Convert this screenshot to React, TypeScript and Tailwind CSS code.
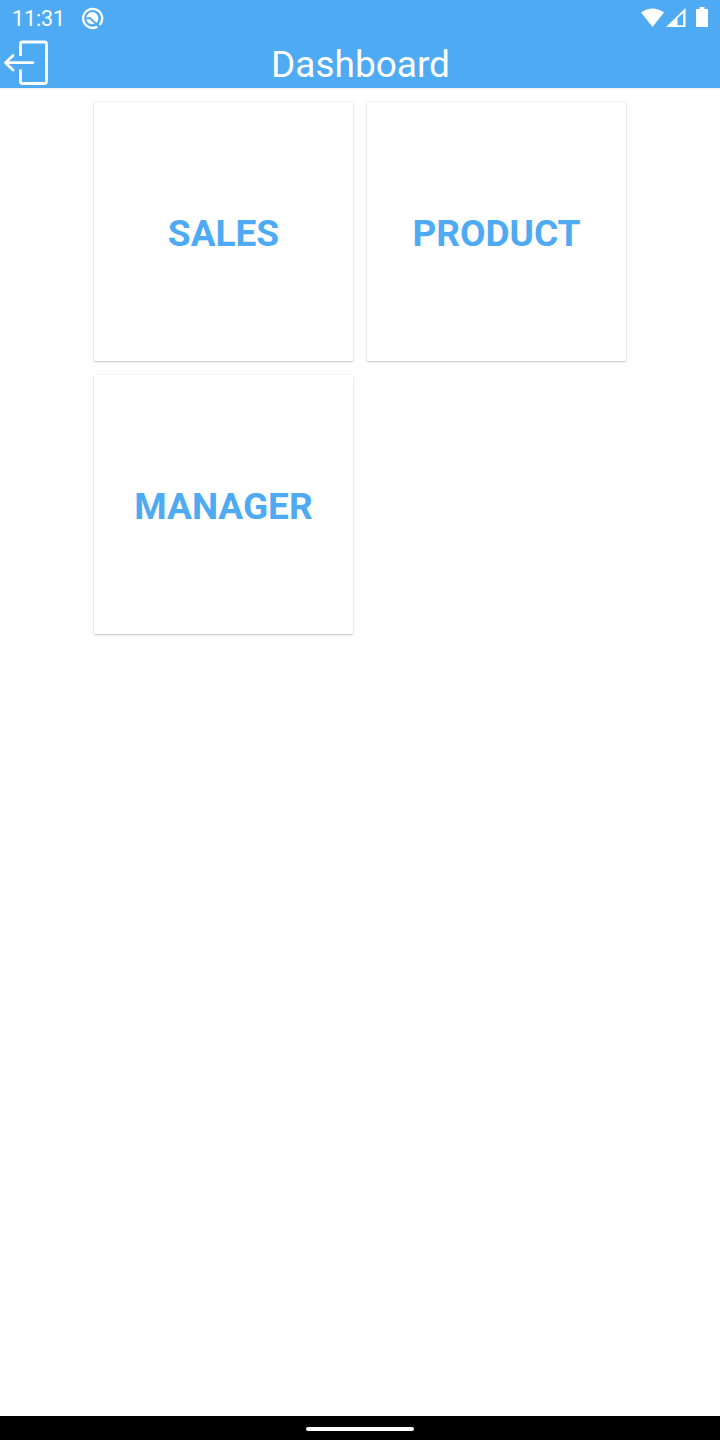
const modules = ['SALES', 'PRODUCT', 'MANAGER'];

function StatusBar() {
  return (
    <div className="flex h-9 items-center justify-between px-3">
      <div className="flex items-center">
        <span className="w-[69px] pt-[2px] text-[21.5px] leading-none tracking-[-0.1px]">11:31</span>
        <svg width="23" height="23" viewBox="0 0 23 23" fill="none">
          <path d="M19.2 17.2 A9.5 9.5 0 1 0 15.5 20.1" stroke="white" strokeWidth="2.3" strokeLinecap="round" />
          <circle cx="11.3" cy="11.2" r="6.1" fill="white" />
          <path d="M5 11.6 L9 11 L16.2 18" stroke="#4daaf3" strokeWidth="1.8" />
        </svg>
      </div>
      <svg width="68" height="22" viewBox="640 7 68 22" fill="white">
        <path d="M641 12.5 Q652.5 4.5 664 12.5 L652.5 27 Z" />
        <path fillRule="evenodd" d="M666 27 L685.5 8 V27 Z M677.5 18.3 V25.3 H683.2 V12.9 Z" />
        <path d="M699.5 7 H704.5 V9 H708 V27 H696 V9 H699.5 Z" />
      </svg>
    </div>
  );
}

function Header() {
  return (
    <div className="grid h-[52px] grid-cols-[52px_1fr_51px] items-center">
      <button aria-label="Log out" className="h-[52px] w-[52px]">
        <svg width="52" height="52" viewBox="0 36 52 52" fill="none" stroke="white" strokeWidth="2.8" strokeLinecap="round" strokeLinejoin="round">
          <path strokeLinecap="butt" d="M20.5 56 V44 Q20.5 42 22.5 42 H44.5 Q46.5 42 46.5 44 V81.5 Q46.5 83.5 44.5 83.5 H22.5 Q20.5 83.5 20.5 81.5 V69.5" />
          <path d="M33 62.7 H5.5 M13 55.5 L5.5 62.7 L13 70" />
        </svg>
      </button>
      <h1 className="pt-1 text-center text-[37px] leading-none">Dashboard</h1>
    </div>
  );
}

export default function App() {
  return (
    <div className="flex h-[1440px] w-[720px] flex-col bg-white font-['Roboto',sans-serif]">
      <header className="h-[88px] shrink-0 bg-[#4daaf3] text-white shadow-[0_1px_2px_rgba(0,0,0,0.08)]">
        <StatusBar />
        <Header />
      </header>
      <main className="flex-1 pl-[94px] pt-[14px]">
        <div className="grid grid-cols-[259px_259px] gap-[14px]">
          {modules.map((name) => (
            <button
              key={name}
              className="flex h-[259px] items-center justify-center rounded-[1px] bg-white pt-[3px] text-[37px] font-bold leading-none text-[#4daaf3] shadow-[0_1px_2px_rgba(0,0,0,0.2),0_0_2px_rgba(0,0,0,0.12)]"
            >
              {name}
            </button>
          ))}
        </div>
      </main>
      <footer className="flex h-6 shrink-0 items-center justify-center bg-black pt-[2px]">
        <div className="h-1 w-[108px] rounded-full bg-white" />
      </footer>
    </div>
  );
}
